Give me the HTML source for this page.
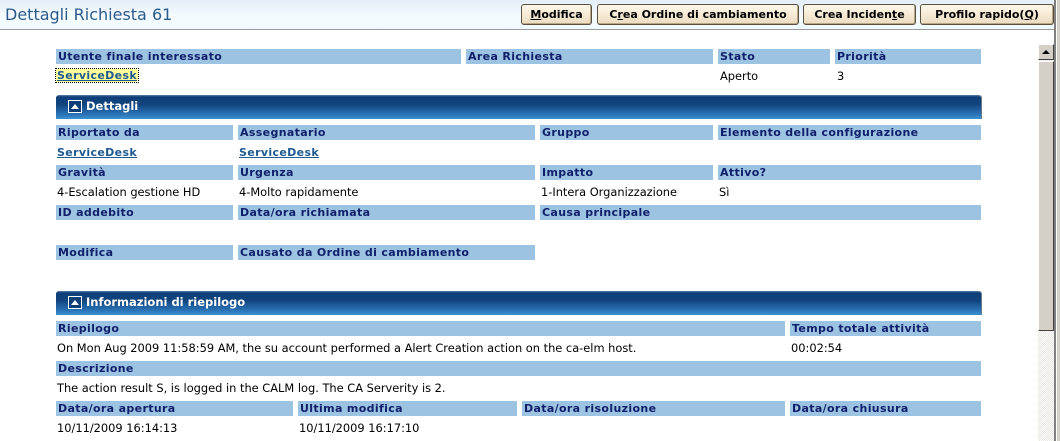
<!DOCTYPE html>
<html><head><meta charset="utf-8"><style>
*{margin:0;padding:0;box-sizing:border-box}
body{width:1060px;height:441px;overflow:hidden;background:#fff;position:relative;font-family:"DejaVu Sans","Liberation Sans",sans-serif;font-size:11.4px;color:#000}
.hdr{position:absolute;left:0;top:0;width:1054px;height:30px;background:linear-gradient(#e4eef8,#f4fcff 60%,#f0fafe);border-bottom:1px solid #9a9a9a}
.title{position:absolute;left:5px;top:5px;font-size:16px;color:#2c5a8c;font-family:"DejaVu Sans",sans-serif}
.btn{position:absolute;top:4px;height:21px;border:1px solid #5a5040;border-radius:3px;background:linear-gradient(#fff8ea,#ecdcc0);font-weight:bold;font-size:11px;color:#000;text-align:center;line-height:19px;box-shadow:inset -1px -1px 0 #b8a888;white-space:nowrap}
.l{position:absolute;height:15px;background:#9dc3e3;color:#101f6a;font-weight:bold;font-size:11px;line-height:16px;padding-left:2px;white-space:nowrap;overflow:hidden;letter-spacing:.35px}
.v{position:absolute;font-size:11.4px;line-height:13px;white-space:nowrap}
.a{color:#1e5a92;font-weight:bold;text-decoration:underline;font-size:11px;letter-spacing:.35px}
.sec{position:absolute;left:56px;width:925px;height:24px;background:linear-gradient(#5a7fa8 0,#0d3d78 2px,#12457f 40%,#2a72b6 80%,#3b92d2);border-radius:3px 3px 0 0;color:#fff;font-weight:bold;font-size:11.5px;line-height:22px;padding-left:30px;box-shadow:1px 0 0 #6a7a8a}
.sec i{position:absolute;left:12px;top:5px;width:14px;height:13px;border:1px solid #fff;background:#0f3f78}
.sec i:after{content:"";position:absolute;left:2px;top:3px;border-left:4px solid transparent;border-right:4px solid transparent;border-bottom:5px solid #fff}
</style></head><body>
<div class="hdr"><div class="title">Dettagli Richiesta 61</div>
<div class="btn" style="left:521px;width:71px"><u>M</u>odifica</div>
<div class="btn" style="left:597px;width:202px">C<u>r</u>ea Ordine di cambiamento</div>
<div class="btn" style="left:803px;width:113px">Crea Inciden<u>t</u>e</div>
<div class="btn" style="left:920px;width:134px">Profilo rapido(<u>Q</u>)</div>
</div>
<div style="position:absolute;left:1054px;top:0;width:2px;height:441px;background:#808080"></div>
<div style="position:absolute;left:1056px;top:0;width:4px;height:441px;background:#d4d0c8;border-left:1px solid #fff"></div>
<div style="position:absolute;left:1038px;top:44px;width:16px;height:397px;background:repeating-conic-gradient(#e8e6e0 0 25%,#fff 0 50%) 0 0/2px 2px"></div>
<div style="position:absolute;left:1038px;top:44px;width:16px;height:16px;background:#d4d0c8;border:1px solid;border-color:#fff #404040 #404040 #fff"><div style="position:absolute;left:3px;top:5px;border-left:4px solid transparent;border-right:4px solid transparent;border-bottom:4px solid #000"></div></div>
<div style="position:absolute;left:1038px;top:61px;width:16px;height:270px;background:#d4d0c8;border:1px solid;border-color:#fff #404040 #404040 #fff"></div>

<div class="l" style="left:56px;top:49px;width:405px">Utente finale interessato</div>
<div class="l" style="left:466px;top:49px;width:247px">Area Richiesta</div>
<div class="l" style="left:718px;top:49px;width:112px">Stato</div>
<div class="l" style="left:835px;top:49px;width:146px">Priorità</div>
<div class="v a" style="left:56px;top:69px;background:#ffff99;outline:1px dotted #000;padding:0 1px">ServiceDesk</div>
<div class="v" style="left:720px;top:70px">Aperto</div>
<div class="v" style="left:837px;top:70px">3</div>

<div class="sec" style="top:95px"><i></i>Dettagli</div>
<div class="l" style="left:56px;top:125px;width:177px">Riportato da</div>
<div class="l" style="left:238px;top:125px;width:297px">Assegnatario</div>
<div class="l" style="left:540px;top:125px;width:173px">Gruppo</div>
<div class="l" style="left:718px;top:125px;width:263px">Elemento della configurazione</div>
<div class="v a" style="left:57px;top:146px">ServiceDesk</div>
<div class="v a" style="left:239px;top:146px">ServiceDesk</div>
<div class="l" style="left:56px;top:165px;width:177px">Gravità</div>
<div class="l" style="left:238px;top:165px;width:297px">Urgenza</div>
<div class="l" style="left:540px;top:165px;width:173px">Impatto</div>
<div class="l" style="left:718px;top:165px;width:263px">Attivo?</div>
<div class="v" style="left:57px;top:186px">4-Escalation gestione HD</div>
<div class="v" style="left:239px;top:186px">4-Molto rapidamente</div>
<div class="v" style="left:541px;top:186px">1-Intera Organizzazione</div>
<div class="v" style="left:719px;top:186px">Sì</div>
<div class="l" style="left:56px;top:205px;width:177px">ID addebito</div>
<div class="l" style="left:238px;top:205px;width:297px">Data/ora richiamata</div>
<div class="l" style="left:540px;top:205px;width:441px">Causa principale</div>
<div class="l" style="left:56px;top:245px;width:177px">Modifica</div>
<div class="l" style="left:238px;top:245px;width:297px">Causato da Ordine di cambiamento</div>

<div class="sec" style="top:291px"><i></i>Informazioni di riepilogo</div>
<div class="l" style="left:56px;top:321px;width:729px">Riepilogo</div>
<div class="l" style="left:790px;top:321px;width:191px">Tempo totale attività</div>
<div class="v" style="left:57px;top:342px">On Mon Aug 2009 11:58:59 AM, the su account performed a Alert Creation action on the ca-elm host.</div>
<div class="v" style="left:791px;top:342px">00:02:54</div>
<div class="l" style="left:56px;top:361px;width:925px">Descrizione</div>
<div class="v" style="left:57px;top:382px">The action result S, is logged in the CALM log. The CA Serverity is 2.</div>
<div class="l" style="left:56px;top:401px;width:237px">Data/ora apertura</div>
<div class="l" style="left:298px;top:401px;width:219px">Ultima modifica</div>
<div class="l" style="left:522px;top:401px;width:263px">Data/ora risoluzione</div>
<div class="l" style="left:790px;top:401px;width:191px">Data/ora chiusura</div>
<div class="v" style="left:57px;top:422px">10/11/2009 16:14:13</div>
<div class="v" style="left:299px;top:422px">10/11/2009 16:17:10</div>
</body></html>
